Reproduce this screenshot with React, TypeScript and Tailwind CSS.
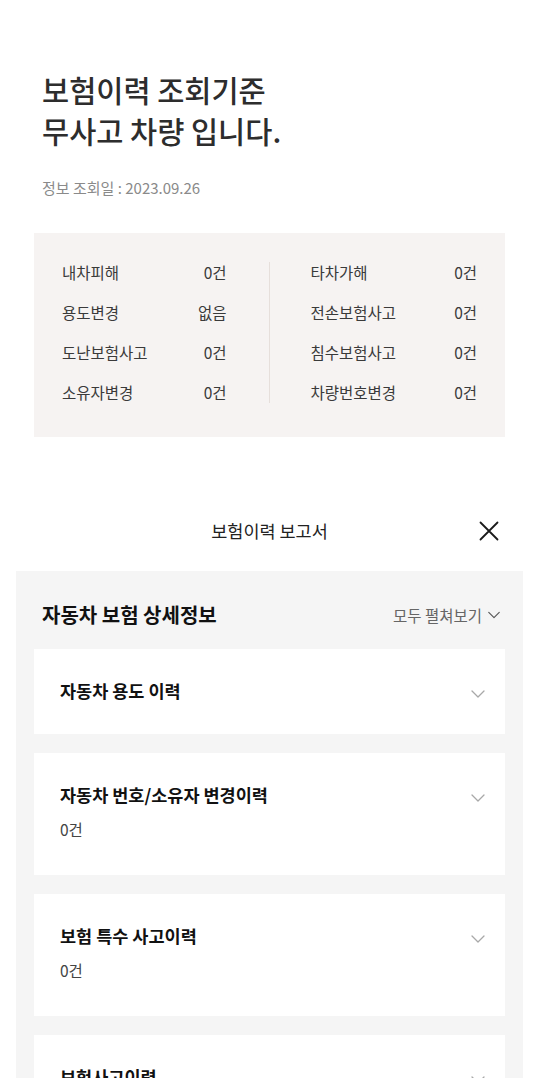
const font = "font-['Noto_Sans_CJK_KR','Noto_Sans',sans-serif]";

const summary: [string, string, string, string][] = [
  ["내차피해", "0건", "타차가해", "0건"],
  ["용도변경", "없음", "전손보험사고", "0건"],
  ["도난보험사고", "0건", "침수보험사고", "0건"],
  ["소유자변경", "0건", "차량번호변경", "0건"],
];

function Chevron({ className }: { className?: string }) {
  return (
    <svg viewBox="0 0 16 16" className={className} fill="none" stroke="currentColor" strokeWidth="1.3" strokeLinecap="round" strokeLinejoin="round">
      <path d="M2 5l6 6 6-6" />
    </svg>
  );
}

function Card({ title, count }: { title: string; count?: string }) {
  return (
    <div className={`bg-white pl-[26px] pr-[19px] pt-[29px] ${count ? "pb-[35px]" : "pb-[30px]"}`}>
      <div className="flex items-center justify-between">
        <h3 className="text-[17.5px] font-bold leading-[26px] text-[#111]">{title}</h3>
        <Chevron className="mt-[6px] h-4 w-4 text-[#a8a8a8]" />
      </div>
      {count && <p className="mt-[10px] text-[15.5px] leading-[22px] text-[#444]">{count}</p>}
    </div>
  );
}

export default function App() {
  return (
    <div className={`min-h-screen w-full bg-white ${font}`}>
      <section className="px-[42px] pt-[69px]">
        <h1 className="text-[29.5px] font-medium leading-[41px] text-[#2d2d2d]">
          보험이력 조회기준
          <br />
          무사고 차량 입니다.
        </h1>
        <p className="mt-[27px] text-[15px] leading-[20px] text-[#8a8a8a]">정보 조회일 : 2023.09.26</p>
      </section>

      <section className="mx-[34px] mt-[35px] bg-[#f6f3f2] px-[28px] pt-[29px] pb-[34px]">
        <div className="grid grid-cols-2">
          <div className="flex flex-col gap-[19px] border-r border-[#e6dfdb] pr-[42px]">
            {summary.map((r) => (
              <div key={r[0]} className="flex justify-between text-[15.5px] leading-[21px] text-[#3a3a3a]">
                <span>{r[0]}</span>
                <span>{r[1]}</span>
              </div>
            ))}
          </div>
          <div className="flex flex-col gap-[19px] pl-[41px]">
            {summary.map((r) => (
              <div key={r[2]} className="flex justify-between text-[15.5px] leading-[21px] text-[#3a3a3a]">
                <span>{r[2]}</span>
                <span>{r[3]}</span>
              </div>
            ))}
          </div>
        </div>
      </section>

      <header className="relative mt-[72px] flex h-[44px] items-center justify-center">
        <h2 className="text-[17.5px] leading-[24px] text-[#222]">보험이력 보고서</h2>
        <svg viewBox="0 0 20 20" className="absolute right-[40px] top-[12px] h-5 w-5 text-[#1a1a1a]" fill="none" stroke="currentColor" strokeWidth="1.8" strokeLinecap="round">
          <path d="M1.5 1.5l17 17M18.5 1.5l-17 17" />
        </svg>
      </header>

      <section className="mx-[16px] mt-[18px] bg-[#f5f5f5] px-[18px] pb-[40px]">
        <div className="flex items-center justify-between pl-[8px] pr-[4px] pt-[31px] pb-[21px]">
          <h2 className="text-[20px] font-bold leading-[26px] text-[#111]">자동차 보험 상세정보</h2>
          <button className="flex items-center gap-[5px] text-[15.5px] leading-[22px] text-[#666]">
            모두 펼쳐보기
            <Chevron className="h-[14px] w-[14px] text-[#555]" />
          </button>
        </div>
        <div className="flex flex-col gap-[19px]">
          <Card title="자동차 용도 이력" />
          <Card title="자동차 번호/소유자 변경이력" count="0건" />
          <Card title="보험 특수 사고이력" count="0건" />
          <Card title="보험사고이력" count="0건" />
        </div>
      </section>
    </div>
  );
}
